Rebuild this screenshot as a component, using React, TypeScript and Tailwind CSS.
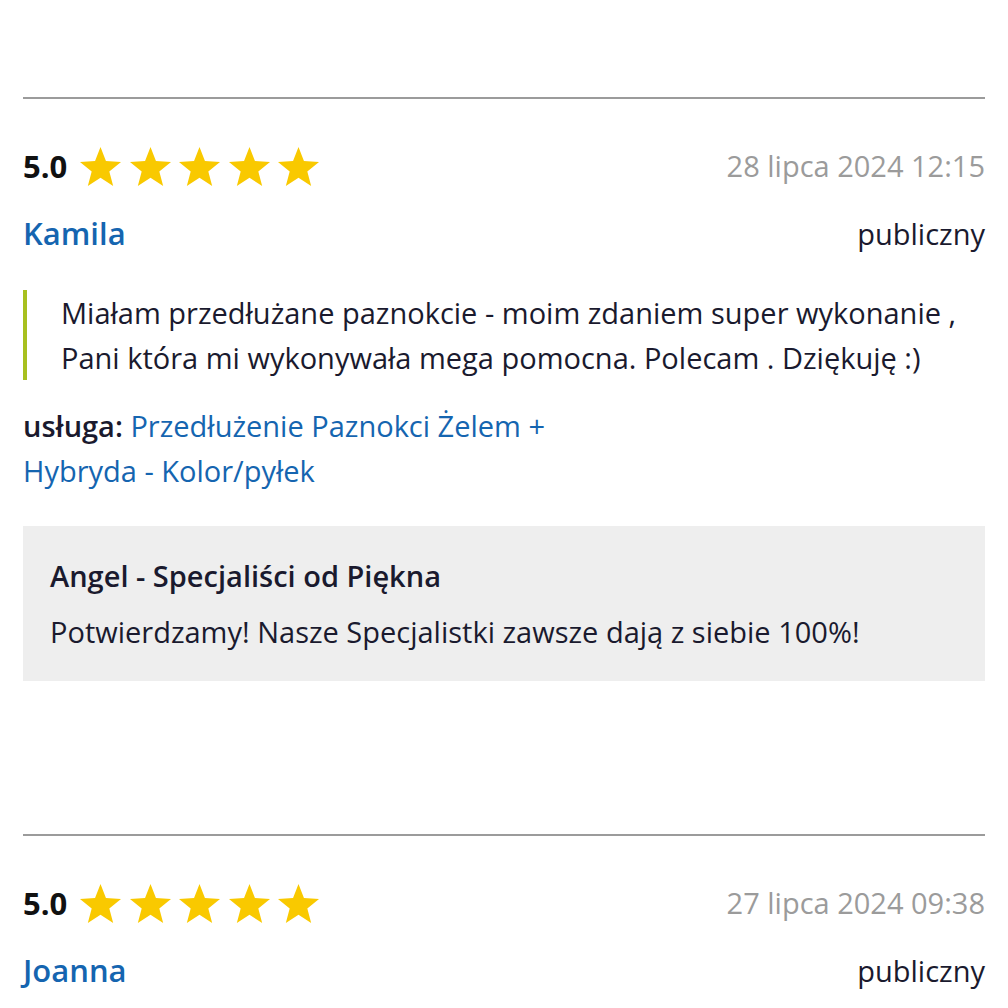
const reviews = [
  {
    rating: "5.0",
    date: "28 lipca 2024 12:15",
    name: "Kamila",
    text: "Miałam przedłużane paznokcie - moim zdaniem super wykonanie , Pani która mi wykonywała mega pomocna. Polecam . Dziękuję :)",
    service: "Przedłużenie Paznokci Żelem + Hybryda - Kolor/pyłek",
    reply: "Potwierdzamy! Nasze Specjalistki zawsze dają z siebie 100%!",
  },
  {
    rating: "5.0",
    date: "27 lipca 2024 09:38",
    name: "Joanna",
    text: "Bardzo miła obsługa, paznokcie wykonane starannie i szybko. Na pewno wrócę!",
    service: "Manicure Hybrydowy",
    reply: "Dziękujemy za miłe słowa i zapraszamy ponownie!",
  },
];

function Star() {
  return (
    <svg viewBox="0 0 41 39" className="h-[39px] w-[41px]" fill="#f9c900">
      <path d="M20.5 0L25.95 14.06L41 14.9L29.32 24.42L33.17 39L20.5 30.83L7.83 39L11.68 24.42L0 14.9L15.05 14.06Z" />
    </svg>
  );
}

function Review({ r }: { r: (typeof reviews)[number] }) {
  return (
    <div className="mb-[153px]">
      <div className="h-[2px] w-full bg-[#9b9b9b]" />
      <div className="mt-[45px] flex h-[44px] items-center justify-between">
        <div className="flex items-center">
          <span className="text-[31px] font-bold text-[#111]">{r.rating}</span>
          <div className="ml-[13px] flex gap-[8.5px]">
            <Star />
            <Star />
            <Star />
            <Star />
            <Star />
          </div>
        </div>
        <span className="text-[29px] text-[#9b9b9b]">{r.date}</span>
      </div>
      <div className="mt-[23px] flex items-center justify-between leading-[45px]">
        <span className="text-[31px] font-semibold text-[#1565b0]">{r.name}</span>
        <span className="text-[29px] text-[#1a1a2e]">publiczny</span>
      </div>
      <blockquote className="mt-[34px] border-l-4 border-[#a8c020] pl-[34px] text-[29px] leading-[45px] text-[#1a1a2e]">
        {r.text}
      </blockquote>
      <div className="mt-[23px] max-w-[600px] text-[29px] leading-[45px]">
        <span className="font-semibold text-[#1a1a2e]">usługa: </span>
        <span className="text-[#1565b0]">{r.service}</span>
      </div>
      <div className="mt-[33px] bg-[#eeeeee] px-[27px] py-[27px] text-[29px] leading-[45px] text-[#1a1a2e]">
        <div className="font-semibold">Angel - Specjaliści od Piękna</div>
        <div className="mt-[11px]">{r.reply}</div>
      </div>
    </div>
  );
}

export default function App() {
  return (
    <div className="min-h-screen bg-white px-[23px] pt-[97px]" style={{ fontFamily: '"Open Sans", sans-serif' }}>
      {reviews.map((r) => (
        <Review key={r.name} r={r} />
      ))}
    </div>
  );
}
